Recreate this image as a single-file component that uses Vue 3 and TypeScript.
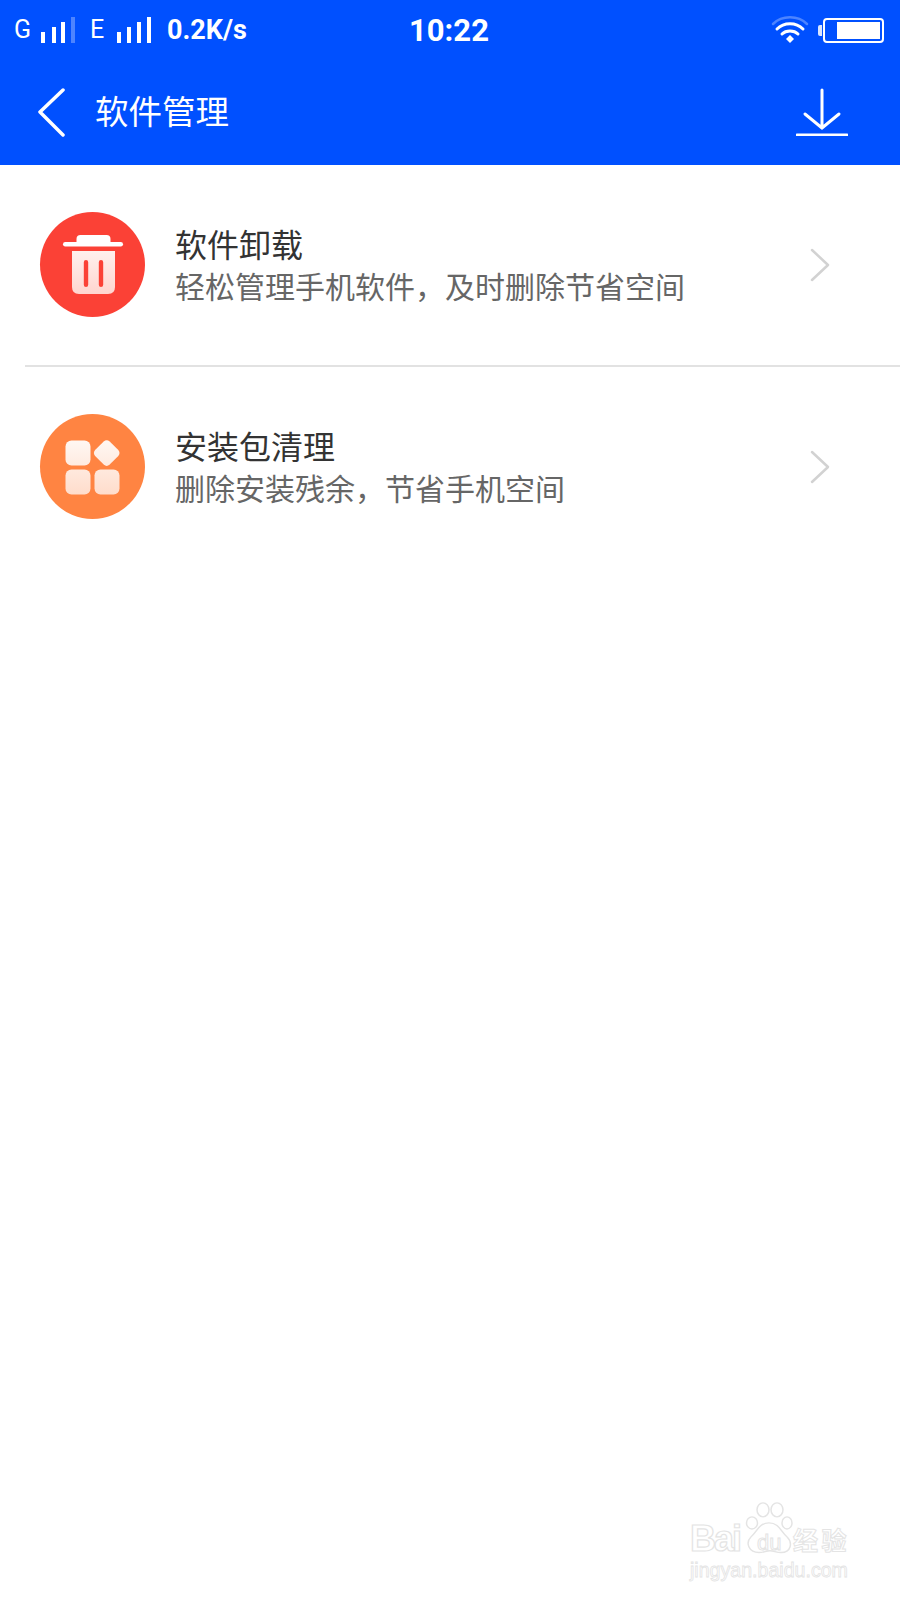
<template>
  <div class="page">
    <header class="top">
      <div class="status">
        <div class="status-left">
          <span class="net">G</span>
          <svg class="bars" width="34" height="26" viewBox="0 0 34 26">
            <rect x="0" y="15" width="4" height="11" fill="#fff" />
            <rect x="11" y="10" width="4" height="16" fill="#fff" />
            <rect x="20" y="5" width="4" height="21" fill="#fff" />
            <rect x="30" y="0" width="4" height="26" fill="#fff" opacity=".3" />
          </svg>
          <span class="net net-e">E</span>
          <svg class="bars" width="34" height="26" viewBox="0 0 34 26">
            <rect x="0" y="15" width="4" height="11" fill="#fff" />
            <rect x="10" y="10" width="4" height="16" fill="#fff" />
            <rect x="20" y="5" width="4" height="21" fill="#fff" />
            <rect x="30" y="0" width="4" height="26" fill="#fff" />
          </svg>
          <span class="speed">0.2K/s</span>
        </div>
        <div class="clock">10:22</div>
        <div class="status-right">
          <svg width="38" height="28" viewBox="0 0 38 28" fill="none" stroke="#fff" stroke-linecap="round">
            <path d="M2 8C11-1 27-1 36 8" stroke-width="2.5" opacity=".3" />
            <path d="M6 13C13 6 25 6 32 13" stroke-width="3" />
            <path d="M11 18C15 14 23 14 27 18" stroke-width="3" />
            <path d="M15 23L19 19L23 23L19 27Z" fill="#fff" stroke="none" />
          </svg>
          <div class="battery">
            <span class="battery-cap"></span>
            <span class="battery-body"><span class="battery-fill"></span></span>
          </div>
        </div>
      </div>
      <nav class="nav">
        <svg class="back" width="28" height="50" viewBox="0 0 28 50" fill="none" stroke="#fff" stroke-width="3.5" stroke-linecap="round" stroke-linejoin="round">
          <path d="M25 2L2 24L25 47" />
        </svg>
        <span class="nav-title">软件管理</span>
        <svg class="download" width="52" height="48" viewBox="0 0 52 48" fill="none" stroke="#fff" stroke-width="3" stroke-linecap="round">
          <path d="M26 2V40M9 26L26 40L43 26" />
          <path d="M1 47H51" />
        </svg>
      </nav>
    </header>

    <main class="list">
      <div v-for="item in items" :key="item.title" class="row">
        <div class="badge" :class="item.kind">
          <svg v-if="item.kind === 'trash'" width="62" height="62" viewBox="0 0 62 62">
            <defs>
              <linearGradient id="trash-grad" gradientUnits="userSpaceOnUse" x1="0" y1="17" x2="0" y2="60">
                <stop offset="0" stop-color="#fff0ed" />
                <stop offset="1" stop-color="#ffd5cf" />
              </linearGradient>
            </defs>
            <path d="M14.5 5Q14.5 1 18.5 1H44.5Q48.5 1 48.5 5V9H14.5Z" fill="#fff" />
            <rect x="1" y="8" width="60" height="4.5" rx="2.2" fill="#fff" />
            <path fill-rule="evenodd" fill="url(#trash-grad)" d="M10 17H53V53Q53 60 46 60H17Q10 60 10 53ZM24 26Q21.8 26 21.8 28.2V50.8Q21.8 53 24 53Q26.2 53 26.2 50.8V28.2Q26.2 26 24 26ZM39 26Q36.8 26 36.8 28.2V50.8Q36.8 53 39 53Q41.2 53 41.2 50.8V28.2Q41.2 26 39 26Z" />
          </svg>
          <svg v-else width="56" height="56" viewBox="0 0 56 56">
            <defs>
              <linearGradient id="pkg-grad" gradientUnits="userSpaceOnUse" x1="0" y1="0" x2="0" y2="56">
                <stop offset="0" stop-color="#fff8f4" />
                <stop offset="1" stop-color="#ffdccb" />
              </linearGradient>
            </defs>
            <g fill="url(#pkg-grad)">
              <rect x="0.5" y="1.5" width="25" height="25" rx="6" />
              <path d="M38.7 2.4Q41.7 0 44.7 2.4L53.3 11Q55.7 14 53.3 17L44.7 25.6Q41.7 28.4 38.7 25.6L30.1 17Q27.7 14 30.1 11Z" />
              <rect x="0.5" y="30.5" width="25" height="25" rx="6" />
              <rect x="29.5" y="30.5" width="25" height="25" rx="6" />
            </g>
          </svg>
        </div>
        <div class="text">
          <div class="title">{{ item.title }}</div>
          <div class="sub">{{ item.sub }}</div>
        </div>
        <svg class="chevron" width="20" height="34" viewBox="0 0 20 34" fill="none" stroke="#d2d2d2" stroke-width="2.5" stroke-linecap="round" stroke-linejoin="round">
          <path d="M2 2L18 17L2 32" />
        </svg>
      </div>
    </main>

    <div class="watermark">
      <div class="wm-top">
        <span class="wm-bai">Bai</span>
        <svg class="wm-paw" width="48" height="54" viewBox="0 0 48 62" preserveAspectRatio="none" fill="none" stroke="#e4e4e4" stroke-width="1.5">
          <ellipse cx="7" cy="24" rx="5.5" ry="7" />
          <ellipse cx="18" cy="9" rx="6" ry="8" />
          <ellipse cx="32" cy="9" rx="6" ry="8" />
          <ellipse cx="42" cy="24" rx="5" ry="7" />
          <path d="M24 24C14 24 12 34 6 40C0 47 4 58 14 58C19 58 21 56 25 56C29 56 31 58 36 58C46 58 48 47 42 40C36 34 34 24 24 24Z" />
        </svg>
        <span class="wm-du">du</span>
        <span class="wm-cn">经验</span>
      </div>
      <div class="wm-url">jingyan.baidu.com</div>
    </div>
  </div>
</template>

<script setup lang="ts">
interface Item {
  kind: 'trash' | 'pkg'
  title: string
  sub: string
}

const items: Item[] = [
  { kind: 'trash', title: '软件卸载', sub: '轻松管理手机软件，及时删除节省空间' },
  { kind: 'pkg', title: '安装包清理', sub: '删除安装残余，节省手机空间' },
]
</script>

<style>
body { margin: 0; background: #fff; }
</style>

<style scoped>
.page { position: relative; width: 900px; height: 1600px; overflow: hidden; background: #fff; font-family: "Roboto", "Noto Sans CJK SC", sans-serif; }
.top { background: #0050ff; color: #fff; height: 165px; }
.status { height: 60px; display: grid; grid-template-columns: 1fr auto 1fr; align-items: center; padding: 0 16px 0 14px; }
.status-left { display: flex; align-items: center; }
.net { font-size: 25px; width: 27px; line-height: 26px; }
.net-e { margin-left: 15px; width: 27px; }
.bars { display: block; }
.speed { font-size: 27px; font-weight: 700; margin-left: 16px; }
.clock { font-size: 31px; font-weight: 700; }
.status-right { display: flex; align-items: center; justify-content: flex-end; gap: 9px; }
.battery { display: flex; align-items: center; }
.battery-cap { width: 4px; height: 11px; background: #fff; border-radius: 2px 0 0 2px; opacity: .85; margin-right: 1px; }
.battery-body { box-sizing: border-box; width: 61px; height: 25px; border: 2px solid #fff; border-radius: 4px; display: flex; justify-content: flex-end; padding: 2px; }
.battery-fill { width: 43px; background: #fff; }
.nav { height: 105px; display: flex; align-items: center; padding: 0 52px 0 38px; }
.back { margin-top: 1px; }
.nav-title { font-size: 33.5px; margin-left: 29px; margin-top: -6px; flex: 1; }
.download { margin-top: -1px; }
.row { height: 202px; box-sizing: border-box; display: flex; align-items: center; margin-left: 25px; padding: 0 70px 0 15px; border-bottom: 2px solid #e2e2e2; }
.row:last-child { height: 200px; border-bottom: none; }
.badge { width: 105px; height: 105px; margin-top: -1px; border-radius: 50%; display: flex; align-items: center; justify-content: center; flex: none; }
.badge.trash { background: #fb4136; }
.badge.pkg { background: #ff8442; }
.text { flex: 1; margin-left: 30px; margin-top: 4px; }
.title { font-size: 32px; line-height: 42px; color: #333; }
.sub { font-size: 30px; line-height: 42px; color: #666; }
.watermark { position: absolute; left: 690px; top: 1500px; width: 170px; color: transparent; }
.wm-top { position: relative; height: 56px; }
.wm-bai { position: absolute; left: 0; top: 17px; font-family: "Liberation Sans", sans-serif; font-size: 36px; font-weight: 700; line-height: 44px; letter-spacing: -2px; -webkit-text-stroke: 1.2px #e4e4e4; }
.wm-paw { position: absolute; left: 55px; top: 2px; }
.wm-du { position: absolute; left: 67px; top: 31px; font-family: "Liberation Sans", sans-serif; font-size: 22px; line-height: 24px; -webkit-text-stroke: 1px #e4e4e4; }
.wm-cn { position: absolute; left: 103px; top: 26px; font-size: 25px; line-height: 32px; font-weight: 700; letter-spacing: 3.5px; -webkit-text-stroke: 1px #e4e4e4; }
.wm-url { position: absolute; left: 0; top: 59px; font-family: "Liberation Sans", sans-serif; font-size: 19.6px; line-height: 22px; white-space: nowrap; -webkit-text-stroke: .8px #e4e4e4; }
</style>
